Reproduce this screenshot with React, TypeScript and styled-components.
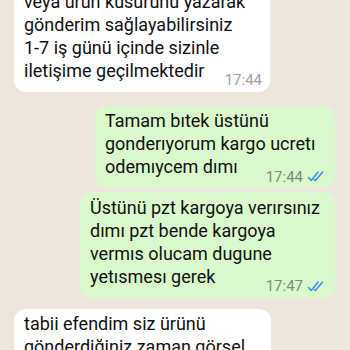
import React from 'react';
import styled, { createGlobalStyle } from 'styled-components';

interface Message {
  out: boolean;
  lines: string[];
  time: string;
  width: number;
  gap: number;
}

const GlobalStyle = createGlobalStyle`
  html, body {
    margin: 0;
    padding: 0;
    background: #ece6dc;
  }

  body {
    font-family: Roboto, "Liberation Sans", "Noto Sans", sans-serif;
    -webkit-font-smoothing: antialiased;
  }
`;

const Screen = styled.div`
  width: 350px;
  height: 350px;
  overflow: hidden;
  background: #ece6dc;
`;

const Thread = styled.div`
  display: flex;
  flex-direction: column;
  margin-top: -14px;
  padding: 0 15px 0 14px;
`;

const Bubble = styled.div<{ $out: boolean; $width: number; $gap: number }>`
  display: flow-root;
  box-sizing: border-box;
  width: ${(p) => p.$width}px;
  align-self: ${(p) => (p.$out ? 'flex-end' : 'flex-start')};
  margin-top: ${(p) => p.$gap}px;
  padding: 3.5px ${(p) => (p.$out ? 10 : 8)}px 3.5px 10px;
  border-radius: 12px;
  background: ${(p) => (p.$out ? '#d9f9cd' : '#ffffff')};
  color: #111111;
  font-size: 18px;
  line-height: 23px;
  white-space: nowrap;
`;

const Meta = styled.span<{ $out: boolean }>`
  float: right;
  display: inline-flex;
  align-items: center;
  gap: 4px;
  margin: 13.5px 0 0 10px;
  font-size: 15px;
  line-height: 16px;
  color: ${(p) => (p.$out ? '#7d8b78' : '#a0a0a0')};
`;

const Ticks = () => (
  <svg width="18" height="11" viewBox="0 0 18 11" fill="none" stroke="#3a91f3" strokeWidth="1.6" strokeLinecap="round" strokeLinejoin="round">
    <path d="M1.5 6.5 L4.2 9.5 L11 1.2" />
    <path d="M7.4 8.6 L8.4 9.5 L15.4 1.2" />
  </svg>
);

const messages: Message[] = [
  {
    out: false,
    lines: ['veya ürün kusurunu yazarak', 'gönderim sağlayabilirsiniz', '1-7 iş günü içinde sizinle', 'iletişime geçilmektedir'],
    time: '17:44',
    width: 256,
    gap: 0,
  },
  {
    out: true,
    lines: ['Tamam bıtek üstünü', 'gonderıyorum kargo ucretı', 'odemıycem dımı'],
    time: '17:44',
    width: 240,
    gap: 14,
  },
  {
    out: true,
    lines: ['Üstünü pzt kargoya verırsınız', 'dımı pzt bende kargoya', 'vermıs olucam dugune', 'yetısmesı gerek'],
    time: '17:47',
    width: 255,
    gap: 4,
  },
  {
    out: false,
    lines: ['tabii efendim siz ürünü', 'gönderdiğiniz zaman görsel', 'olarak bize iletebilirsiniz'],
    time: '17:48',
    width: 257,
    gap: 11,
  },
];

const App: React.FC = () => {
  return (
    <>
      <GlobalStyle />
      <Screen>
        <Thread>
          {messages.map((msg, index) => (
            <Bubble key={index} $out={msg.out} $width={msg.width} $gap={msg.gap}>
              {msg.lines.map((line, i) => (
                <React.Fragment key={i}>
                  {i > 0 && <br />}
                  {line}
                </React.Fragment>
              ))}
              <Meta $out={msg.out}>
                {msg.time}
                {msg.out && <Ticks />}
              </Meta>
            </Bubble>
          ))}
        </Thread>
      </Screen>
    </>
  );
};

export default App;
